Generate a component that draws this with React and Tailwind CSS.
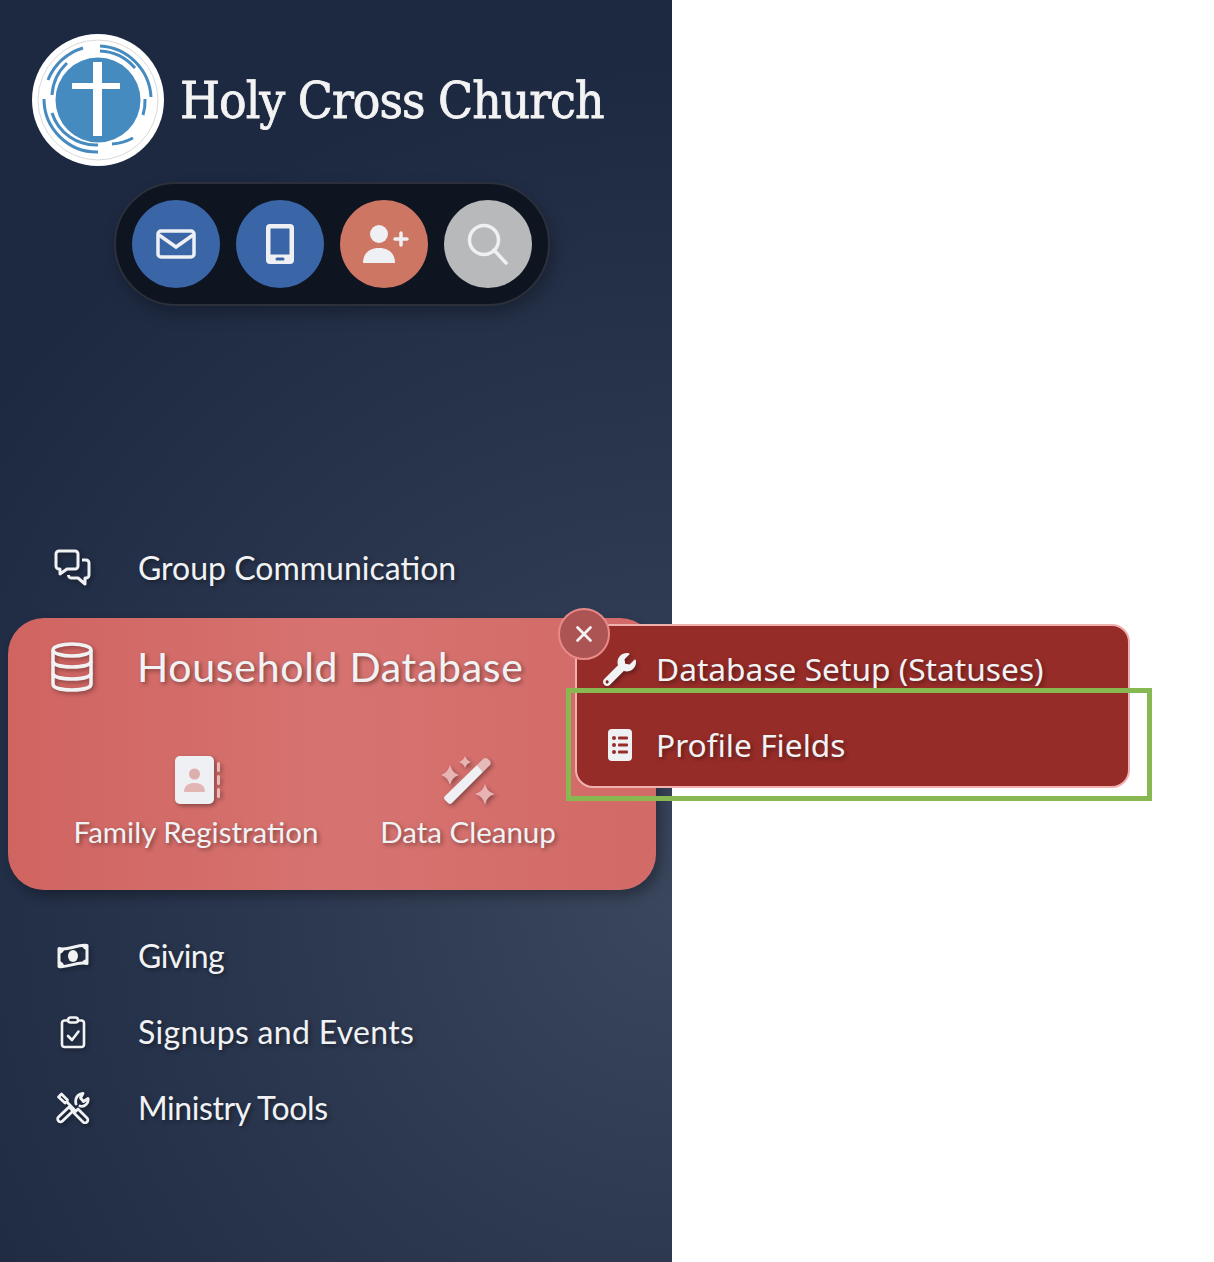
import { X } from "lucide-react";
import { FaWrench } from "react-icons/fa";

const raleway = "font-['Lato','Open_Sans',sans-serif]";
const softText = "[text-shadow:2px_2px_4px_rgba(0,0,0,0.4)]";
const softIcon = "drop-shadow-[2px_2px_2px_rgba(0,0,0,0.35)]";

const Logo = () => (
  <svg viewBox="0 0 132 132" className="w-[132px] h-[132px] shrink-0">
    <circle cx="66" cy="66" r="66" fill="#fff" />
    <circle cx="66" cy="66" r="60" fill="none" stroke="#c8c8c8" strokeWidth="0.7" />
    <circle cx="66" cy="66" r="42.5" fill="#468bbf" />
    <g fill="none" stroke="#468bbf" strokeWidth="3">
      <path d="M68 12 A54 54 0 0 1 119 63" />
      <path d="M68 17 A49 49 0 0 1 103 34" />
      <path d="M113 65 A47 47 0 0 1 111 81" />
      <path d="M101 104 A52 52 0 0 1 80 110" />
      <path d="M66 111 A46 46 0 0 1 20 79" />
      <path d="M66 118 A53 53 0 0 1 12 65" />
      <path d="M51 14 A54 54 0 0 0 16 46" />
      <path d="M35 29 A48 48 0 0 0 20 61" />
    </g>
    <rect x="61" y="28" width="9" height="74" fill="#fff" />
    <rect x="40" y="49" width="48" height="6" fill="#fff" />
  </svg>
);

const Envelope = () => (
  <svg viewBox="0 0 40 30" className="w-10 h-[30px]">
    <rect x="2" y="2" width="36" height="26" rx="3" fill="none" stroke="#eef0f3" strokeWidth="3.5" />
    <path d="M3 6 L20 18 L37 6" fill="none" stroke="#eef0f3" strokeWidth="3.5" />
  </svg>
);

const Phone = () => (
  <svg viewBox="0 0 28 40" className="w-7 h-10">
    <rect x="0" y="0" width="28" height="40" rx="4" fill="#eef0f3" />
    <rect x="4.5" y="4.5" width="19" height="26" fill="#3a66a8" />
    <rect x="9.5" y="33.5" width="9" height="3" rx="1.5" fill="#3a66a8" />
  </svg>
);

const UserPlus = () => (
  <svg viewBox="0 0 46 38" className="w-[46px] h-[38px] ml-1">
    <circle cx="16" cy="9" r="9" fill="#eef0f3" />
    <path d="M0 38 C0 28 7 23 16 23 C25 23 32 28 32 38 Z" fill="#eef0f3" />
    <path d="M38 8 V20 M32 14 H44" stroke="#eef0f3" strokeWidth="3.5" strokeLinecap="round" />
  </svg>
);

const Search = () => (
  <svg viewBox="0 0 42 42" className="w-[42px] h-[42px]">
    <circle cx="17" cy="17" r="14.5" fill="none" stroke="#eef0f3" strokeWidth="3.5" />
    <path d="M27 27 L39 40" stroke="#eef0f3" strokeWidth="3.5" strokeLinecap="round" />
  </svg>
);

const Comments = () => (
  <svg viewBox="0 0 38 38" className="w-[38px] h-[38px]" fill="none" stroke="currentColor" strokeWidth="3" strokeLinejoin="round">
    <path d="M5 2 H21 a3 3 0 0 1 3 3 V17 a3 3 0 0 1 -3 3 H13 L6 25 V20 H5 a3 3 0 0 1 -3 -3 V5 a3 3 0 0 1 3 -3 Z" />
    <path d="M28 11 H32 a3 3 0 0 1 3 3 V26 a3 3 0 0 1 -3 3 H31 V35 L24 29 H18 a3 3 0 0 1 -3.5 -3" />
  </svg>
);

const Money = () => (
  <svg viewBox="0 0 34 28" className="w-[34px] h-7">
    <path
      fill="none"
      stroke="currentColor"
      strokeWidth="3"
      strokeLinejoin="round"
      d="M3 6.5 C12 9 21 2 31 3.5 V21.5 C21 19 12 26 3 24.5 Z"
    />
    <path fill="currentColor" d="M2 6 C4 7 6 7.5 8 7.5 C8 10 5 12 2 12 Z M2 19 C5 19 8 21 8 24 C6 24 4 25 2 25 Z M32 3 C30 3 28 3 26 3.5 C26 6 29 8 32 8 Z M32 17 C29 17 26 19 26 21 C28 21 30 21.500 32 22 Z" />
    <ellipse cx="17" cy="14" rx="5" ry="6" fill="currentColor" />
  </svg>
);

const ClipboardCheck = () => (
  <svg viewBox="0 0 26 33" className="w-[26px] h-[33px]" fill="none" stroke="currentColor" strokeWidth="2.6" strokeLinejoin="round">
    <path d="M8 4.5 H4.5 a2.5 2.5 0 0 0 -2.5 2.5 V28.5 a2.5 2.5 0 0 0 2.5 2.500 H21.5 a2.5 2.5 0 0 0 2.5 -2.500 V7 a2.5 2.5 0 0 0 -2.5 -2.5 H18" />
    <rect x="8" y="1.5" width="10" height="5" rx="2.5" />
    <path d="M8 20 L12 24 L18.5 15.5" strokeLinecap="round" />
  </svg>
);

const Tools = () => (
  <svg viewBox="0 0 34 32" className="w-[34px] h-8" fill="none" stroke="currentColor" strokeWidth="2.8" strokeLinejoin="round" strokeLinecap="round">
    <path d="M2.5 5 L5.5 2 L11.5 8 L9 11 Z" />
    <path d="M11 10 L19 18.5" />
    <path d="M18 21 L22 17 L31 26 a2.8 2.8 0 0 1 -4 4 Z" />
    <path d="M2.5 25 L13 15 L17 19 L6.5 29 a2.8 2.8 0 0 1 -4 -4 Z" />
    <path d="M20 12 C18.5 6 22 2 27 1.5 L24.5 6 L27.5 9.5 L32 6.5 C33 11 28.5 15.5 24 14" />
  </svg>
);

const DatabaseIcon = () => (
  <svg viewBox="0 0 44 50" className="w-11 h-[50px]" fill="none" stroke="currentColor" strokeWidth="3.5">
    <ellipse cx="22" cy="8" rx="19" ry="6" />
    <path d="M3 8 V42 C3 46 12 48 22 48 S41 46 41 42 V8" />
    <path d="M3 19 C3 23 12 25 22 25 S41 23 41 19" />
    <path d="M3 31 C3 35 12 37 22 37 S41 35 41 31" />
  </svg>
);

const AddressBook = () => (
  <svg viewBox="0 0 46 50" className={`w-[46px] h-[50px] ml-[3px] ${softIcon}`}>
    <rect x="0" y="0" width="39" height="48" rx="5" fill="#eef0f3" />
    <circle cx="19.5" cy="18" r="5.5" fill="#dcaeae" />
    <path d="M9 36 C9 29 14 27 19.5 27 C25 27 30 29 30 36 Z" fill="#e3b6b6" />
    <g fill="#e8b9b8">
      <rect x="42" y="6" width="3" height="10" rx="1.5" />
      <rect x="42" y="19" width="3" height="10" rx="1.5" />
      <rect x="42" y="32" width="3" height="10" rx="1.5" />
    </g>
  </svg>
);

const Wand = () => (
  <svg viewBox="0 0 54 50" className={`w-[54px] h-[50px] ${softIcon}`}>
    <path d="M9 9 C11 15 13 17 18 19 C13 21 11 23 9 29 C7 23 5 21 0 19 C5 17 7 15 9 9 Z" fill="#e7b4b3" />
    <path d="M24 0 C25 3 27 5 30 6 C27 7 25 9 24 12 C23 9 21 7 18 6 C21 5 23 3 24 0 Z" fill="#e7b4b3" />
    <path d="M44 28 C46 34 48 36 54 38 C48 40 46 42 44 49 C42 42 40 40 34 38 C40 36 42 34 44 28 Z" fill="#e7b4b3" />
    <path d="M36 9 L42 3 Q45 1 47 3 L49 5 Q51 8 48 10 L42 16 Z" fill="#e5bab9" />
    <path d="M36 9 L42 16 L11 47 Q9 49 7 47 L4 44 Q2 42 4 40 Z" fill="#eef0f3" />
  </svg>
);

const ListCard = () => (
  <svg viewBox="0 0 24 32" className="w-6 h-8">
    <rect x="0" y="0" width="24" height="32" rx="4" fill="#eef0f3" />
    <g fill="#962c28">
      <circle cx="6" cy="9" r="2" />
      <circle cx="6" cy="16" r="2" />
      <circle cx="6" cy="23" r="2" />
      <rect x="10" y="7.5" width="10" height="3" rx="1" />
      <rect x="10" y="14.5" width="10" height="3" rx="1" />
      <rect x="10" y="21.5" width="10" height="3" rx="1" />
    </g>
  </svg>
);

const actions = [
  { id: "mail", bg: "bg-[#3a66a8]", icon: <Envelope /> },
  { id: "phone", bg: "bg-[#3a66a8]", icon: <Phone /> },
  { id: "add", bg: "bg-[#cd7663]", icon: <UserPlus /> },
  { id: "search", bg: "bg-[#b8b9bb]", icon: <Search /> },
];

const lowerMenu = [
  { label: "Giving", icon: <Money />, spacing: "tracking-[-0.6px]" },
  { label: "Signups and Events", icon: <ClipboardCheck />, spacing: "tracking-[0.3px]" },
  { label: "Ministry Tools", icon: <Tools />, spacing: "tracking-[-0.4px]" },
];

const MenuRow = ({ label, icon, spacing }) => (
  <div className="h-[76px] flex items-center text-[#f1f2f4]">
    <div className={`w-[138px] pl-[54px] pr-[46px] flex justify-center ${softIcon}`}>{icon}</div>
    <span className={`${raleway} ${softText} text-[32px] ${spacing}`}>{label}</span>
  </div>
);

export default function App() {
  return (
    <div className="relative w-full h-[1262px] bg-white overflow-hidden">
      {/* Sidebar */}
      <div className="w-[672px] h-full pt-[34px] bg-[radial-gradient(circle_at_100%_72%,#3a465c_0px,#2c3850_380px,#1d2941_850px)]">
        <div className="flex items-center pl-8 gap-4">
          <Logo />
          <h1 className="font-['DejaVu_Serif',serif] font-stretch-condensed text-[51px] text-[#f3f3f3] tracking-[-1px] [-webkit-text-stroke:0.8px_#f3f3f3] mt-[3px] whitespace-nowrap">
            Holy Cross Church
          </h1>
        </div>

        {/* Quick actions */}
        <div className="mt-4 w-[436px] ml-[114px] h-[124px] rounded-full bg-[#0e1420] border-2 border-[#2b303a] shadow-[4px_8px_16px_rgba(0,0,0,0.25)] flex items-center justify-center gap-4">
          {actions.map((a) => (
            <div key={a.id} className={`w-[88px] h-[88px] rounded-full flex items-center justify-center ${a.bg}`}>
              {a.icon}
            </div>
          ))}
        </div>

        <div className="mt-[224px]">
          <MenuRow label="Group Communication" icon={<Comments />} spacing="tracking-normal" />
        </div>

        {/* Expanded card */}
        <div className="ml-2 mt-[12px] w-[648px] h-[272px] rounded-[36px] bg-gradient-to-r from-[#d06461] via-[#d67370] to-[#d26a67] shadow-[4px_6px_12px_rgba(0,0,0,0.3)] text-[#f1f2f4]">
          <div className="flex items-center h-[98px]">
            <div className={`w-[129px] pl-[42px] ${softIcon}`}>
              <DatabaseIcon />
            </div>
            <span className={`${raleway} ${softText} text-[41px] tracking-[0.7px]`}>Household Database</span>
          </div>
          <div className="flex mt-[40px]">
            <div className="w-[376px] flex flex-col items-center">
              <AddressBook />
              <span className={`${raleway} ${softText} text-[29.5px] mt-[5px] leading-[42px]`}>Family Registration</span>
            </div>
            <div className="w-[168px] flex flex-col items-center">
              <Wand />
              <span className={`${raleway} ${softText} text-[29.5px] mt-[5px] leading-[42px] whitespace-nowrap`}>Data Cleanup</span>
            </div>
          </div>
        </div>

        <div className="mt-[28px]">
          {lowerMenu.map((m) => (
            <MenuRow key={m.label} label={m.label} icon={m.icon} spacing={m.spacing} />
          ))}
        </div>
      </div>

      {/* Flyout */}
      <div className="absolute left-[575px] top-[624px] w-[555px] h-[164px] rounded-[18px] bg-[#962c28] border-2 border-[#f0b0ae] pt-[5px] text-[#f1f2f4] font-['Noto_Sans',sans-serif] text-[31.7px]">
        <div className="h-[76px] flex items-center">
          <div className={`w-[79px] flex justify-center pl-[6px] ${softIcon}`}>
            <FaWrench size={33} />
          </div>
          <span className={softText}>Database Setup (Statuses)</span>
        </div>
        <div className="h-[76px] flex items-center">
          <div className="w-[79px] flex justify-center pl-[6px]">
            <ListCard />
          </div>
          <span className={softText}>Profile Fields</span>
        </div>
      </div>

      {/* Close button */}
      <div className="absolute left-[558px] top-[608px] w-[52px] h-[52px] rounded-full bg-[#ac5353] border-2 border-[#e88a87] flex items-center justify-center text-[#f4f4f4]">
        <X size={26} strokeWidth={2.5} />
      </div>

      {/* Highlight annotation */}
      <div className="absolute left-[566px] top-[688px] w-[586px] h-[113px] border-[5px] border-[#88b852]" />
    </div>
  );
}
